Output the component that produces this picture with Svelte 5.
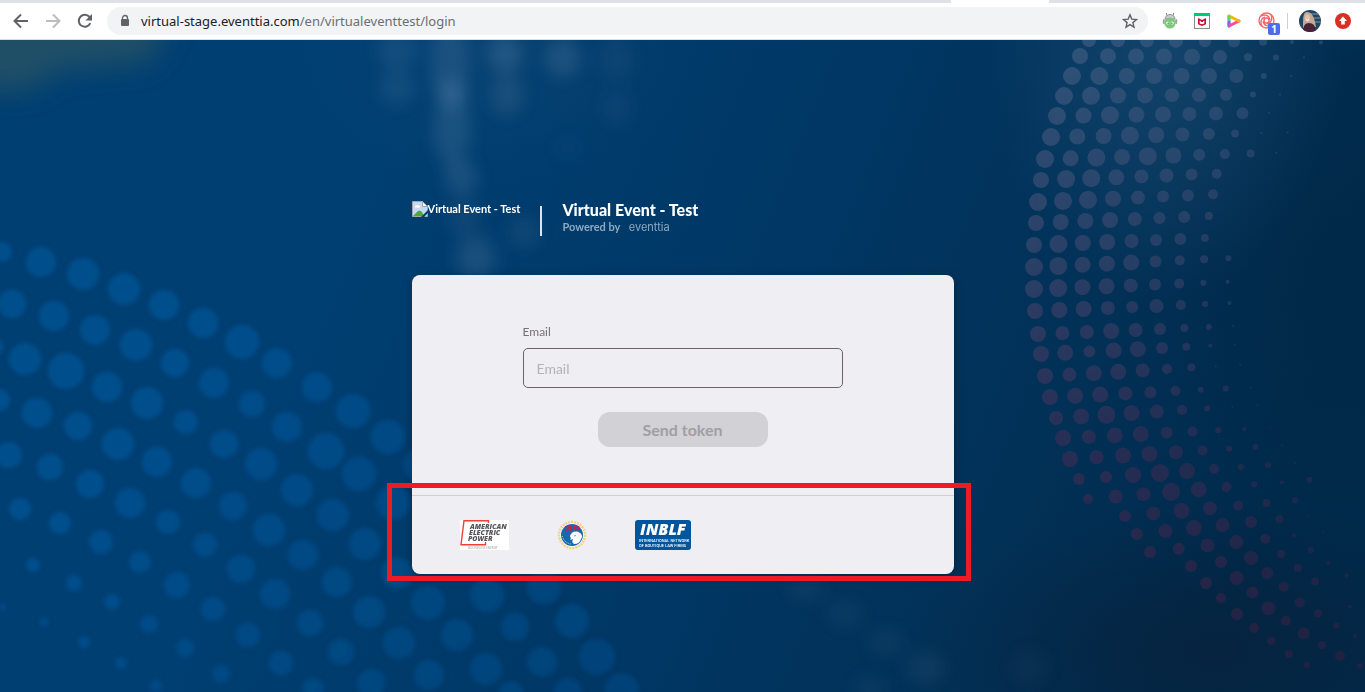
<script lang="ts">
	let email = '';

	// [x, y, radius] of the soft dots in the lower left
	const softDots = [
		[2, 252, 10], [41, 262, 15], [83, 274, 16], [124, 289, 16], [164, 305, 15], [203, 323, 15],
		[242, 342, 17], [277, 363, 15], [317, 387, 15], [353, 411, 17], [388, 437, 17], [421, 465, 17],
		[12, 304, 14], [54, 316, 15], [95, 330, 15], [136, 345, 16], [175, 363, 14], [214, 383, 15],
		[252, 404, 13], [287, 427, 15], [326, 451, 18], [359, 474, 17], [393, 503, 17],
		[-5, 347, 8], [25, 359, 16], [66, 371, 18], [107, 387, 15], [147, 403, 16], [186, 422, 12], [224, 444, 14],
		[261, 464, 16], [297, 490, 16], [333, 515, 16], [365, 544, 16], [397, 573, 16], [428, 603, 17],
		[-1, 400, 11], [37, 413, 15], [78, 426, 14], [118, 444, 16], [157, 462, 15], [196, 483, 15],
		[233, 506, 14], [269, 530, 16], [303, 555, 15], [337, 582, 15], [369, 612, 16], [399, 643, 16],
		[429, 675, 15], [9, 455, 13], [50, 467, 13], [90, 484, 14], [130, 503, 15], [168, 522, 12],
		[205, 545, 12], [241, 569, 14], [275, 594, 15], [310, 623, 13], [341, 652, 13], [371, 683, 14],
		[20, 509, 11], [60, 523, 11], [101, 542, 12], [140, 562, 11], [177, 585, 13], [213, 609, 12],
		[248, 635, 12], [281, 663, 12], [313, 689, 11], [33, 565, 7], [74, 583, 8], [112, 602, 8],
		[149, 624, 9], [185, 648, 9], [221, 674, 9], [3, 607, 3], [44, 622, 4], [84, 642, 6],
		[121, 663, 6], [156, 686, 6], [487, 595, 17], [544, 587, 17], [457, 635, 16], [515, 627, 14],
		[572, 621, 17], [486, 669, 16], [542, 662, 15], [597, 657, 18], [622, 690, 17], [568, 692, 14],
		[511, 693, 12]
	];

	// rows of the halftone arc on the right: start, step to the next dot, radii
	const arcRows = [
		{ x: 1089, y: 40, dx: 29, dy: 0.3, r: [7, 7, 7, 7, 6, 6, 4, 2, 2] },
		{ x: 1080, y: 56, dx: 28, dy: 0.2, r: [8, 8, 8, 8, 8, 7, 4, 3, 1] },
		{ x: 1072, y: 76, dx: 27.4, dy: 0, r: [9, 9, 8, 8, 8, 8, 7, 3, 1] },
		{ x: 1064, y: 96, dx: 27, dy: -0.2, r: [9, 9, 8, 8, 7, 7, 6, 3, 1] },
		{ x: 1057, y: 116, dx: 26.5, dy: -0.4, r: [9, 8, 9, 8, 8, 7, 7, 6, 1] },
		{ x: 1051, y: 137, dx: 26.3, dy: -0.5, r: [9, 8, 8, 9, 8, 7, 6, 4, 1, 1] },
		{ x: 1045, y: 159, dx: 25.7, dy: -0.7, r: [9, 8, 9, 8, 9, 8, 6, 5, 4, 1] },
		{ x: 1041, y: 180, dx: 25.1, dy: -0.9, r: [8, 9, 9, 8, 7, 7, 6, 5] },
		{ x: 1038, y: 202, dx: 25, dy: -1.1, r: [9, 9, 9, 8, 7, 6, 6, 5] },
		{ x: 1036, y: 223, dx: 24.7, dy: -1, r: [8, 8, 8, 8, 7, 6, 6, 4] },
		{ x: 1034, y: 245, dx: 24.4, dy: -1, r: [8, 9, 8, 8, 7, 6, 6, 4] },
		{ x: 1034, y: 267, dx: 24.3, dy: -1.1, r: [9, 9, 8, 8, 8, 6, 5, 4, 3] },
		{ x: 1034, y: 289, dx: 24.2, dy: -0.9, r: [9, 9, 8, 8, 7, 6, 5, 3, 2] },
		{ x: 1035, y: 311, dx: 24.3, dy: -1, r: [8, 8, 8, 7, 6, 7, 5, 3, 2] },
		{ x: 1038, y: 334, dx: 24.4, dy: -1, r: [8, 7, 7, 8, 7, 6, 4, 3, 1] },
		{ x: 1041, y: 354, dx: 24.2, dy: -1.2, r: [8, 8, 6, 8, 8, 6, 4, 2, 1] },
		{ x: 1045, y: 376, dx: 24.4, dy: -1.4, r: [8, 7, 8, 8, 7, 5, 4, 1, 1] },
		{ x: 1050, y: 397, dx: 25.1, dy: -1.2, r: [8, 8, 8, 7, 6, 5, 3, 3, 1] },
		{ x: 1056, y: 418, dx: 25.2, dy: -1.6, r: [7, 8, 9, 8, 7, 5, 3, 1, 1] },
		{ x: 1063, y: 438, dx: 25.9, dy: -1.3, r: [8, 7, 8, 8, 6, 5, 3, 2, 1] },
		{ x: 1070, y: 459, dx: 26.5, dy: -1.7, r: [8, 7, 8, 8, 7, 5, 3, 3, 1] },
		{ x: 1079, y: 479, dx: 27, dy: -2, r: [6, 6, 8, 9, 8, 5, 3, 3, 1] },
		{ x: 1088, y: 499, dx: 27.7, dy: -2.4, r: [5, 7, 7, 9, 8, 5, 3, 2, 3] },
		{ x: 1125, y: 516, dx: 28.3, dy: -2.6, r: [6, 7, 8, 7, 5, 4, 3] },
		{ x: 1137, y: 534, dx: 28.5, dy: -3, r: [6, 7, 8, 7, 6, 4, 1] },
		{ x: 1150, y: 552, dx: 28.8, dy: -3.3, r: [6, 6, 7, 7, 5, 2, 1] },
		{ x: 1191, y: 566, dx: 30, dy: -4, r: [6, 6, 7, 4, 3] },
		{ x: 1206, y: 583, dx: 30.6, dy: -5, r: [6, 7, 6, 4, 2] },
		{ x: 1221, y: 598, dx: 31.4, dy: -5.6, r: [5, 6, 5, 4, 2] },
		{ x: 1237, y: 614, dx: 31.4, dy: -5.8, r: [6, 7, 5] },
		{ x: 1254, y: 628, dx: 32, dy: -7.2, r: [5, 5, 4, 2] },
		{ x: 1271, y: 641, dx: 32.7, dy: -7.7, r: [4, 6, 3] },
		{ x: 1289, y: 654, dx: 33, dy: -9, r: [4, 4, 2] },
		{ x: 1307, y: 665, dx: 33, dy: -9, r: [3, 5] },
		{ x: 1360, y: 666, dx: 33, dy: -9, r: [3] }
	];

	const arcDots = arcRows.flatMap((row) =>
		row.r.map((r, i) => ({ x: row.x + i * row.dx, y: row.y + i * row.dy, r }))
	);

	// blurred lights: [x, y, rx, ry, opacity]
	const lights = [
		[397, 50, 20, 20, 0.09], [397, 88, 18, 18, 0.09], [450, 60, 20, 40, 0.12], [452, 93, 17, 15, 0.14],
		[452, 130, 19, 36, 0.14], [461, 178, 17, 18, 0.14], [505, 54, 18, 18, 0.16], [507, 95, 17, 22, 0.11],
		[563, 58, 18, 20, 0.14], [617, 60, 18, 22, 0.06], [617, 108, 16, 18, 0.05], [568, 148, 15, 12, 0.03],
		[524, 232, 16, 16, 0.09], [476, 258, 20, 22, 0.14], [465, 218, 16, 20, 0.08], [806, 588, 18, 14, 0.06],
		[845, 614, 18, 14, 0.06], [886, 642, 18, 14, 0.06], [926, 668, 20, 16, 0.07], [870, 688, 18, 12, 0.05],
		[1030, 668, 20, 20, 0.04]
	];
</script>

<header class="browser">
	<div class="tabs"><span class="tab"></span></div>
	<div class="toolbar">
		<button class="tool" aria-label="Back">
			<svg width="20" height="20" viewBox="0 0 20 20"><path d="M17 10H4M10 3.5L3.5 10l6.500 6.500" fill="none" stroke="#5f6368" stroke-width="2" /></svg>
		</button>
		<button class="tool" aria-label="Forward" disabled>
			<svg width="20" height="20" viewBox="0 0 20 20"><path d="M3 10h13M10 3.500L16.500 10 10 16.500" fill="none" stroke="#babcbe" stroke-width="2" /></svg>
		</button>
		<button class="tool" aria-label="Reload">
			<svg width="20" height="20" viewBox="0 0 20 20"><path d="M15.300 12.200A6 6 0 1 1 14.500 6" fill="none" stroke="#5f6368" stroke-width="2" /><path d="M17 3v6.500h-6.500z" fill="#5f6368" /></svg>
		</button>
		<div class="address">
			<svg width="10" height="14" viewBox="0 0 10 14"><path d="M2.500 6V4a2.500 2.500 0 0 1 5 0v2" fill="none" stroke="#5f6368" stroke-width="1.300" /><rect x="1" y="5" width="8" height="7" rx="1" fill="#5f6368" /></svg>
			<span class="url">virtual-stage.eventtia.com<span>/en/virtualeventtest/login</span></span>
			<button class="star" aria-label="Bookmark this page">
				<svg width="16" height="16" viewBox="0 0 16 16"><path d="M8 1.800l1.800 4.300 4.700.4-3.600 3.100 1.100 4.600L8 11.700l-4 2.500 1.100-4.600-3.600-3.100 4.700-.4z" fill="none" stroke="#5f6368" stroke-width="1.400" /></svg>
			</button>
		</div>
		<div class="extensions">
			<button aria-label="Android extension">
				<svg width="16" height="16" viewBox="0 0 16 16"><path d="M4.500 0v1.500L6 4M11.500 0v1.500L10 4" fill="none" stroke="#777" /><path d="M3 6a5 4.500 0 0 1 10 0z" fill="#c9cdcb" stroke="#808582" stroke-width=".8" /><rect x=".8" y="6" width="2" height="5" rx="1" fill="#9aa79b" /><rect x="13.200" y="6" width="2" height="5" rx="1" fill="#9aa79b" /><circle cx="8" cy="10" r="5.600" fill="#7fc77e" /><circle cx="5.700" cy="10" r="1.600" fill="#e8f6e5" /><circle cx="10.300" cy="10" r="1.600" fill="#e8f6e5" /><circle cx="6.200" cy="10.300" r=".8" fill="#459346" /><circle cx="9.800" cy="10.300" r=".8" fill="#459346" /></svg>
			</button>
			<button aria-label="Web protection">
				<svg width="16" height="16" viewBox="0 0 16 16"><rect x=".5" y=".5" width="15" height="15" fill="#fff" stroke="#8b8b8b" /><path d="M0 0h16v3H0z" fill="#00c878" /><path d="M4 5l4 2 4-2v6.300L8 13l-4-1.700z" fill="#c8102e" /><path d="M5.700 7.500L8 9l2.300-1.500v2.900L8 11.300l-2.300-.9z" fill="#fff" /><path d="M7 7.500l1 .5 1-.5v1.500H7z" fill="#c8102e" /></svg>
			</button>
			<button aria-label="Video player">
				<svg width="16" height="16" viewBox="0 0 16 16" fill="none" stroke-width="3" stroke-linecap="round"><path d="M3 3v10" stroke="#29c5f6" /><path d="M3 9v4" stroke="#9a55f4" /><path d="M4 12.500L13 8" stroke="#ff4aa5" /><path d="M3 3l10 5" stroke="#ffb400" /><path d="M3 4v2" stroke="#62d84e" /></svg>
			</button>
			<button class="badged" aria-label="Screen recorder">
				<svg width="18" height="18" viewBox="0 0 18 18" fill="none" stroke="#f6696b" stroke-width="1.400"><circle cx="8.500" cy="8.500" r="7.500" /><path d="M6 8.500a2.500 2.500 0 1 1 5 0a2.500 2.500 0 1 1-5 0M3 4c4-2 8-1 9 4M13 3c2 4 0 8-4 9M14 13c-4 2-8 1-9-4M4 14C2 10 3 6 7 5" /></svg>
				<span class="badge">1</span>
			</button>
			<span class="separator"></span>
			<button aria-label="Profile">
				<svg width="22" height="22" viewBox="0 0 22 22"><defs><clipPath id="face"><circle cx="11" cy="11" r="11" /></clipPath></defs><g clip-path="url(#face)"><path d="M0 0h22v22H0z" fill="#1f4763" /><path d="M10 4h12M10 8h12M10 12h12" stroke="#8398a8" stroke-width="1" /><path d="M4 18C4 8 4 2 8 2s7 3 9 15z" fill="#c3aa96" /><ellipse cx="8.500" cy="8" rx="2.500" ry="3.500" fill="#e6bfaa" /><path d="M7 9.500q1.500 2 3 0" stroke="#fff" fill="none" /><path d="M4 22c0-6 2-9 6-9s7 3 7 9z" fill="#482237" /></g></svg>
			</button>
			<button aria-label="Update browser">
				<svg width="16" height="16" viewBox="0 0 16 16"><circle cx="8" cy="8" r="8" fill="#d93025" /><path d="M8 3.500L12 8H9.800v3.500H6.200V8H4z" fill="#fff" /></svg>
			</button>
		</div>
	</div>
</header>

<main>
	<svg class="backdrop" viewBox="0 40 1365 652" preserveAspectRatio="xMidYMid slice" aria-hidden="true">
		<defs>
			<linearGradient id="base" gradientUnits="userSpaceOnUse" x1="350" y1="200" x2="1250" y2="560">
				<stop offset="0" stop-color="#003f72" />
				<stop offset=".4" stop-color="#003866" />
				<stop offset=".75" stop-color="#023157" />
				<stop offset="1" stop-color="#002a4b" />
			</linearGradient>
			<radialGradient id="haze"><stop offset="0" stop-color="#285a82" stop-opacity=".6" /><stop offset="1" stop-color="#285a82" stop-opacity="0" /></radialGradient>
			<radialGradient id="shade"><stop offset="0" stop-color="#08213b" stop-opacity=".75" /><stop offset="1" stop-color="#08213b" stop-opacity="0" /></radialGradient>
			<radialGradient id="dusk"><stop offset="0" stop-color="#002848" stop-opacity=".9" /><stop offset="1" stop-color="#002848" stop-opacity="0" /></radialGradient>
			<linearGradient id="arc" gradientUnits="userSpaceOnUse" x1="0" y1="40" x2="0" y2="680">
				<stop offset="0" stop-color="#3b5b80" />
				<stop offset=".35" stop-color="#36446b" />
				<stop offset=".65" stop-color="#352d54" />
				<stop offset="1" stop-color="#3c1f43" />
			</linearGradient>
			<linearGradient id="arc-fade" gradientUnits="userSpaceOnUse" x1="1030" y1="0" x2="1300" y2="0">
				<stop offset="0" stop-color="#fff" />
				<stop offset="1" stop-color="#aaa" />
			</linearGradient>
			<mask id="arc-mask" maskUnits="userSpaceOnUse" x="1000" y="0" width="400" height="700"><rect x="1000" width="400" height="700" fill="url(#arc-fade)" /></mask>
			<linearGradient id="soft" gradientUnits="userSpaceOnUse" x1="200" y1="350" x2="620" y2="690">
				<stop offset="0" stop-color="#004f8d" />
				<stop offset="1" stop-color="#004278" />
			</linearGradient>
			<filter id="blur" x="-10%" y="-10%" width="120%" height="120%"><feGaussianBlur stdDeviation="2" /></filter>
			<filter id="wide-blur" x="-20%" y="-20%" width="140%" height="140%"><feGaussianBlur stdDeviation="8" /></filter>
			<filter id="olive-blur" x="-50%" y="-50%" width="200%" height="200%"><feGaussianBlur stdDeviation="14" /></filter>
		</defs>
		<rect y="40" width="1365" height="652" fill="url(#base)" />
		<path d="M-40 0h220l-30 62-90 8-30 20h-70z" fill="#2c5463" opacity=".75" filter="url(#olive-blur)" />
		<ellipse cx="500" cy="40" rx="200" ry="150" fill="url(#haze)" opacity=".3" />
		<ellipse cx="1340" cy="280" rx="190" ry="260" fill="url(#dusk)" />
		<ellipse cx="1165" cy="40" rx="180" ry="260" fill="url(#haze)" opacity=".75" />
		<ellipse cx="1210" cy="650" rx="300" ry="150" fill="url(#shade)" />
		<g filter="url(#wide-blur)" fill="#a9bed2">
			{#each lights as [x, y, rx, ry, opacity]}
				<ellipse cx={x} cy={y} {rx} {ry} {opacity} />
			{/each}
		</g>
		<g filter="url(#blur)" fill="url(#soft)">
			{#each softDots as [x, y, r]}
				<circle cx={x} cy={y} {r} />
			{/each}
		</g>
		<g fill="url(#arc)" opacity=".8" mask="url(#arc-mask)">
			{#each arcDots as dot}
				<circle cx={dot.x} cy={dot.y} r={dot.r} />
			{/each}
		</g>
	</svg>

	<div class="login">
		<div class="brand">
			<div class="logo">
				<svg width="16" height="16" viewBox="0 0 16 16"><path d="M.5.500h10l5 5v10H.500z" fill="#c5d8f5" stroke="#a5a5a5" /><path d="M3 6.500a1.500 1.500 0 0 1 2-2 2 2 0 0 1 3 2z" fill="#fff" /><path d="M1 15l5-5q2-1 4 1l2 4z" fill="#51a931" /><path d="M9 16l7-7v3l-4 4z" fill="#003e70" /><path d="M10.500.500v5h5z" fill="#fff" stroke="#a5a5a5" /></svg><span>Virtual Event - Test</span>
			</div>
			<div class="title">
				<h1>Virtual Event - Test</h1>
				<p>Powered by <span>eventtia</span></p>
			</div>
		</div>

		<div class="card">
			<form on:submit|preventDefault>
				<label for="email">Email</label>
				<input id="email" type="email" placeholder="Email" bind:value={email} />
				<button type="submit" disabled={!email}>Send token</button>
			</form>
			<div class="sponsors">
				<svg width="49" height="30" viewBox="0 0 49 30" role="img" aria-label="American Electric Power">
					<path d="M0 0h49v30H0z" fill="#fff" />
					<path d="M28.500 3V.7H4L1 24.700h24.500V22" fill="none" stroke="#ee4136" stroke-width="1.400" />
					<g class="aep"><text x="10" y="9">AMERICAN</text><text x="9" y="15">ELECTRIC</text><text x="8" y="21">POWER</text></g>
					<text class="aep-line" x="8" y="29">BOUNDLESS ENERGY</text>
				</svg>
				<svg width="30" height="30" viewBox="0 0 30 30" role="img" aria-label="USPF">
					<circle cx="15" cy="15" r="13" fill="none" stroke="#efd381" stroke-width="2.500" stroke-dasharray="2 1" />
					<circle cx="15" cy="15" r="11.500" fill="#fff" />
					<circle cx="15" cy="15" r="11" fill="#1769ad" />
					<path d="M13 16c1-4 6-6 10-3 3 2 2 5 1 6-1 3-3 5-7 5-2-1-2-3-1-5l-3 1c1-1 1-2 0-4z" fill="#fff" />
					<path d="M17 16l2-.5" stroke="#6ca4ca" />
					<path d="M5 16c2 5 4 7 9 8" fill="none" stroke="#b9d3e7" stroke-dasharray="1 1" />
					<text class="uspf" x="15" y="11">USPF</text>
				</svg>
				<svg width="56" height="30" viewBox="0 0 56 30" role="img" aria-label="INBLF">
					<rect width="56" height="30" rx="3" fill="#00559d" />
					<text class="inblf" x="5" y="15">INBLF</text>
					<text class="inblf-line" x="4" y="22">INTERNATIONAL NETWORK</text>
					<text class="inblf-line" x="4" y="27">OF BOUTIQUE LAW FIRMS</text>
				</svg>
				<div class="highlight"></div>
			</div>
		</div>
	</div>
</main>

<style>
	:global(body) {
		margin: 0;
	}

	:global(#app) {
		display: flex;
		flex-direction: column;
		min-height: 100vh;
	}

	button {
		padding: 0;
		border: 0;
		background: none;
	}

	svg {
		display: block;
		flex: none;
	}

	.browser {
		background: #fff;
		border-bottom: 1px solid #dadce0;
	}

	.tabs {
		display: flex;
		justify-content: flex-end;
		height: 3px;
		padding-right: 316px;
		background: #dee1e6;
	}

	.tab {
		width: 98px;
		background: #fff;
	}

	.toolbar {
		display: flex;
		align-items: center;
		height: 36px;
		padding: 0 14px 0 11px;
	}

	.tool {
		margin-right: 12px;
	}

	.address {
		display: flex;
		flex: 1;
		align-items: center;
		gap: 11px;
		height: 28px;
		padding: 0 10px 0 13px;
		border-radius: 14px;
		background: #f1f3f4;
	}

	.url {
		flex: 1;
		color: #202124;
		font: 13px 'Noto Sans', sans-serif;
	}

	.url span {
		color: #6b6f73;
	}

	.extensions {
		display: flex;
		align-items: center;
		gap: 16px;
		margin-left: 14px;
	}

	.badged {
		position: relative;
	}

	.badge {
		position: absolute;
		right: -4px;
		bottom: -5px;
		width: 12px;
		height: 12px;
		border-radius: 2px;
		background: #4f6bed;
		color: #fff;
		font: bold 10px/12px 'Open Sans', sans-serif;
	}

	.separator {
		width: 1px;
		height: 16px;
		margin: 0 -5px;
		background: #cfd1d4;
	}

	.separator + button {
		margin-right: -2px;
	}

	main {
		position: relative;
		display: flex;
		flex: 1;
		justify-content: center;
		overflow: hidden;
		background: #003a69;
		font-family: Lato, sans-serif;
	}

	.backdrop {
		position: absolute;
		inset: 0;
		width: 100%;
		height: 100%;
	}

	.login {
		position: relative;
		width: 542px;
		max-width: 100%;
		padding: 161px 0 118px;
	}

	.brand {
		display: flex;
		margin-bottom: 39px;
		color: #fff;
	}

	.logo {
		display: flex;
		font-size: 11px;
		font-weight: 700;
		line-height: 16px;
	}

	.title {
		margin: 5px 0 0 20px;
		padding-left: 20px;
		border-left: 2px solid #dfe4ec;
		height: 30px;
	}

	h1 {
		margin: -5px 0 0;
		font-size: 16px;
		font-weight: 900;
		line-height: 18px;
	}

	p {
		margin: 0;
		color: #8fa9c1;
		font-size: 11px;
		font-weight: 700;
		line-height: 15px;
	}

	p span {
		margin-left: 6px;
		font-family: Inter, sans-serif;
		font-weight: 400;
	}

	.card {
		border-radius: 8px;
		background: #efeef3;
		box-shadow: 0 2px 10px rgba(0, 0, 0, 0.25);
	}

	form {
		display: flex;
		flex-direction: column;
		align-items: center;
		width: 320px;
		margin: 0 auto;
		padding: 48px 0;
	}

	label {
		align-self: flex-start;
		margin-bottom: 8px;
		color: #756f77;
		font-size: 12px;
		line-height: 17px;
	}

	input {
		box-sizing: border-box;
		width: 100%;
		height: 40px;
		margin-bottom: 24px;
		padding: 0 13px;
		border: 1px solid #6b646e;
		border-radius: 5px;
		background: transparent;
		color: #554f58;
		font: 14px Lato, sans-serif;
	}

	input::placeholder {
		color: #b3b2b6;
	}

	form button {
		width: 170px;
		height: 35px;
		border-radius: 12px;
		background: #d2d1d6;
		color: #a09fa2;
		font: bold 16px Lato, sans-serif;
	}

	.sponsors {
		position: relative;
		display: flex;
		align-items: center;
		gap: 48px;
		height: 78px;
		padding-left: 48px;
		border-top: 1px solid #d0cfd5;
	}

	.highlight {
		position: absolute;
		inset: -13px -17px -7px -25px;
		border: 5px solid #ed1c24;
	}

	text {
		font-family: 'Open Sans', sans-serif;
		font-weight: 800;
	}

	.aep {
		fill: #55565a;
		font-size: 7px;
		font-style: italic;
	}

	.aep-line {
		fill: #999;
		font-size: 3px;
		font-weight: 400;
	}

	.uspf {
		fill: #cf1f3f;
		font-size: 6px;
		text-anchor: middle;
	}

	.inblf {
		fill: #fff;
		font-size: 16px;
		font-style: italic;
	}

	.inblf-line {
		fill: #fff;
		font-family: Roboto, sans-serif;
		font-size: 4px;
		font-weight: 500;
	}
</style>
